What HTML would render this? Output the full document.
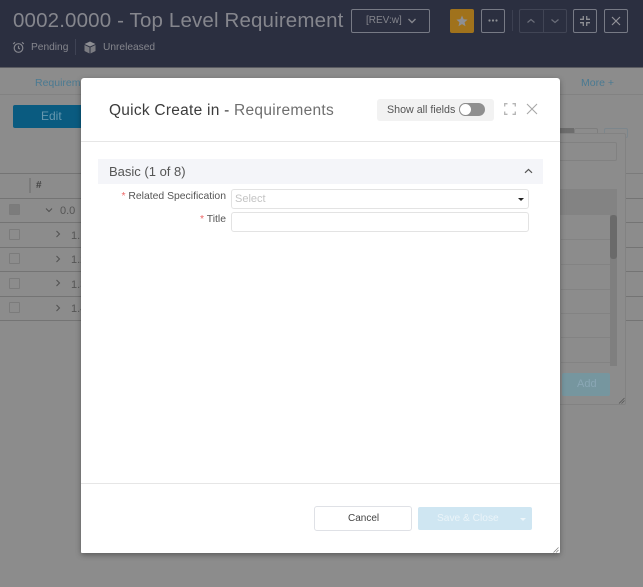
<!DOCTYPE html>
<html><head><meta charset="utf-8">
<style>
html,body{margin:0;padding:0;width:643px;height:587px;overflow:hidden;background:#8c8c8c}
body{position:relative;font-family:"Liberation Sans",sans-serif}
div,span,svg{position:absolute;box-sizing:border-box}
.t{white-space:nowrap;line-height:1}
.btn{border:1px solid #777a85;border-radius:2px;height:24px;top:9px}
.row{left:0;width:81px;height:1px;background:#747474}
.cb{left:9px;width:11px;height:11px;border:1px solid #7b7b7b;border-radius:1px}
.line{left:561px;height:1px;width:50px;background:#838383}
</style></head><body>
<div style="left:0;top:0;width:643px;height:68px;background:#2b2f40"></div>
<div style="left:0;top:67px;width:643px;height:1px;background:#5a5b61"></div>
<div class="t" style="left:13px;top:11px;font-size:20.5px;color:#85868d;letter-spacing:.15px">0002.0000 - Top Level Requirement</div>

<svg style="left:12px;top:41px" width="13" height="13" viewBox="0 0 13 13" fill="none" stroke="#85868d" stroke-width="1.2"><circle cx="6.5" cy="7" r="4.3"/><path d="M6.5 4.8V7.2L8 8M1.2 3 3 1.3M11.8 3 10 1.3"/></svg>
<div class="t" style="left:31px;top:43px;font-size:10.2px;color:#85868d">Pending</div>
<div style="left:75px;top:39px;width:1px;height:16px;background:#3f4354"></div>
<svg style="left:84px;top:41px" width="12" height="13" viewBox="0 0 12 13"><path d="M6 .5 11.5 3 6 5.5.5 3Z" fill="#8e8f94"/><path d="M.5 4 5.5 6.4V12.5L.5 10ZM11.5 4 6.5 6.4V12.5L11.5 10Z" fill="#7b7c82"/></svg>
<div class="t" style="left:103px;top:43px;font-size:10.2px;color:#85868d">Unreleased</div>

<div class="btn" style="left:351px;width:79px"></div>
<div class="t" style="left:366px;top:16px;font-size:10px;color:#85868d">[REV:w]</div>
<svg style="left:407px;top:17px" width="10" height="8" viewBox="0 0 10 8" fill="none" stroke="#85868d" stroke-width="1.4"><path d="M1.5 2 5 5.5 8.5 2"/></svg>

<div style="left:450px;top:9px;width:24px;height:24px;background:#a0721c;border-radius:2px"></div>
<svg style="left:456px;top:15px" width="12" height="12" viewBox="0 0 12 12"><path d="M6 .5 7.6 4.2 11.6 4.6 8.6 7.2 9.5 11.2 6 9.1 2.5 11.2 3.4 7.2.4 4.6 4.4 4.2Z" fill="#8e8f94"/></svg>

<div class="btn" style="left:481px;width:24px"></div>
<svg style="left:488px;top:18px" width="10" height="5" viewBox="0 0 10 5" fill="#8e8f94"><circle cx="1.5" cy="2.5" r="1.1"/><circle cx="5" cy="2.5" r="1.1"/><circle cx="8.5" cy="2.5" r="1.1"/></svg>

<div style="left:512px;top:10px;width:1px;height:21px;background:#3c4051"></div>
<div class="btn" style="left:519px;width:48px;border-color:#414555"></div>
<div style="left:543px;top:9px;width:1px;height:24px;background:#414555"></div>
<svg style="left:526px;top:17px" width="10" height="8" viewBox="0 0 10 8" fill="none" stroke="#6c6f7a" stroke-width="1.2"><path d="M1.5 5.5 5 2.5 8.5 5.5"/></svg>
<svg style="left:550px;top:17px" width="10" height="8" viewBox="0 0 10 8" fill="none" stroke="#6c6f7a" stroke-width="1.2"><path d="M1.5 2.5 5 5.5 8.5 2.5"/></svg>

<div class="btn" style="left:573px;width:24px"></div>
<svg style="left:579px;top:15px" width="12" height="12" viewBox="0 0 12 12" fill="none" stroke="#8e8f94" stroke-width="1.3"><path d="M4.3 1V4.3H1M7.7 1V4.3H11M4.3 11V7.7H1M7.7 11V7.7H11"/></svg>
<div class="btn" style="left:604px;width:24px"></div>
<svg style="left:611px;top:16px" width="10" height="10" viewBox="0 0 10 10" fill="none" stroke="#92939a" stroke-width="1.2"><path d="M1 1 9 9M9 1 1 9"/></svg>

<!-- background page -->
<div style="left:0;top:94px;width:643px;height:1px;background:#828282"></div>
<div class="t" style="left:35px;top:78px;font-size:10.5px;color:#4a7a92;width:46px;overflow:hidden;height:13px">Requirements</div>
<div class="t" style="left:581px;top:78px;font-size:10.5px;color:#4a7a92">More +</div>
<div style="left:13px;top:105px;width:75px;height:23px;background:#0a5b80;border-radius:2px"></div>
<div class="t" style="left:41px;top:110px;font-size:12px;color:#6797ae">Edit</div>

<div class="row" style="top:173px"></div>
<div style="left:29px;top:178px;width:2px;height:15px;background:#7b7b7b"></div>
<div class="t" style="left:36px;top:181px;font-size:10px;font-weight:bold;color:#444">#</div>
<div class="row" style="top:198px"></div>
<div class="row" style="top:222px"></div>
<div class="row" style="top:247px"></div>
<div class="row" style="top:271px"></div>
<div class="row" style="top:296px"></div>
<div class="row" style="top:320px"></div>
<div class="cb" style="top:204px;background:#7c7c7c"></div>
<div class="cb" style="top:229px"></div>
<div class="cb" style="top:253px"></div>
<div class="cb" style="top:278px"></div>
<div class="cb" style="top:302px"></div>
<svg style="left:45px;top:207px" width="8" height="6" viewBox="0 0 8 6" fill="none" stroke="#505050" stroke-width="1"><path d="M1 1.5 4 4.5 7 1.5"/></svg>
<div class="t" style="left:60px;top:206px;font-size:11px;color:#555">0.0</div>
<svg style="left:55px;top:230px" width="6" height="8" viewBox="0 0 6 8" fill="none" stroke="#505050" stroke-width="1"><path d="M1.5 1 4.5 4 1.5 7"/></svg>
<svg style="left:55px;top:255px" width="6" height="8" viewBox="0 0 6 8" fill="none" stroke="#505050" stroke-width="1"><path d="M1.5 1 4.5 4 1.5 7"/></svg>
<svg style="left:55px;top:279px" width="6" height="8" viewBox="0 0 6 8" fill="none" stroke="#505050" stroke-width="1"><path d="M1.5 1 4.5 4 1.5 7"/></svg>
<svg style="left:55px;top:304px" width="6" height="8" viewBox="0 0 6 8" fill="none" stroke="#505050" stroke-width="1"><path d="M1.5 1 4.5 4 1.5 7"/></svg>
<div class="t" style="left:71px;top:231px;font-size:11px;color:#555">1.1</div>
<div class="t" style="left:71px;top:255px;font-size:11px;color:#555">1.2</div>
<div class="t" style="left:71px;top:280px;font-size:11px;color:#555">1.3</div>
<div class="t" style="left:71px;top:304px;font-size:11px;color:#555">1.4</div>

<!-- right background panel -->
<div style="left:604px;top:128px;width:24px;height:10px;border:1px solid #7c868c;border-radius:2px"></div>
<div style="left:560px;top:128px;width:14px;height:5px;background:#6d6d6d"></div>
<div style="left:574px;top:128px;width:24px;height:6px;border:1px solid #7e7e7e;border-radius:2px 2px 0 0"></div>
<div style="left:620px;top:173px;width:23px;height:1px;background:#7b7b7b"></div>
<div style="left:626px;top:198px;width:17px;height:1px;background:#747474"></div>
<div style="left:626px;top:222px;width:17px;height:1px;background:#747474"></div>
<div style="left:626px;top:247px;width:17px;height:1px;background:#747474"></div>
<div style="left:626px;top:271px;width:17px;height:1px;background:#747474"></div>
<div style="left:626px;top:296px;width:17px;height:1px;background:#747474"></div>
<div style="left:626px;top:320px;width:17px;height:1px;background:#747474"></div>
<div style="left:540px;top:133px;width:86px;height:272px;background:#8c8c8c;border:1px solid #828282;border-radius:2px"></div>
<div style="left:556px;top:142px;width:61px;height:19px;border:1px solid #818181;border-radius:2px"></div>
<div style="left:556px;top:189px;width:61px;height:26px;background:#838383"></div>
<div class="line" style="top:239px"></div>
<div class="line" style="top:264px"></div>
<div class="line" style="top:289px"></div>
<div class="line" style="top:313px"></div>
<div class="line" style="top:337px"></div>
<div class="line" style="top:362px"></div>
<div style="left:610px;top:215px;width:7px;height:151px;background:#7f7f7f"></div>
<div style="left:610px;top:215px;width:7px;height:44px;background:#6a6a6a;border-radius:3px"></div>
<div style="left:562px;top:373px;width:48px;height:23px;background:#76969f;border-radius:2px"></div>
<div class="t" style="left:577px;top:379px;font-size:11px;color:#8aa7b5">Add</div>
<svg style="left:618px;top:397px" width="7" height="7" viewBox="0 0 7 7" fill="none" stroke="#555" stroke-width=".8"><path d="M1 6.5 6.5 1M3.5 6.5 6.5 3.5"/></svg>

<!-- modal -->
<div style="left:81px;top:78px;width:479px;height:475px;background:#fff;border-radius:3px 3px 1px 1px;box-shadow:0 2px 6px rgba(0,0,0,.35)"></div>
<div class="t" style="left:109px;top:103px;font-size:15.5px;color:#3c3c3c;letter-spacing:.25px">Quick Create in -</div>
<div class="t" style="left:234px;top:103px;font-size:15.5px;color:#6f6f6f;letter-spacing:.3px">Requirements</div>
<div style="left:377px;top:99px;width:117px;height:22px;background:#f2f2f2;border-radius:3px"></div>
<div class="t" style="left:387px;top:105px;font-size:10.7px;color:#555">Show all fields</div>
<div style="left:459px;top:103px;width:26px;height:13px;background:#8f8f8f;border-radius:7px"></div>
<div style="left:459px;top:103px;width:13px;height:13px;background:#fff;border:1px solid #8f8f8f;border-radius:50%"></div>
<svg style="left:504px;top:103px" width="12" height="12" viewBox="0 0 12 12" fill="none" stroke="#b5b5b5" stroke-width="1.3"><path d="M.7 3.5V.7H3.5M8.5.7H11.3V3.5M.7 8.5V11.3H3.5M8.5 11.3H11.3V8.5"/></svg>
<svg style="left:526px;top:103px" width="12" height="12" viewBox="0 0 12 12" fill="none" stroke="#a8a8a8" stroke-width="1.1"><path d="M1 1 11 11M11 1 1 11"/></svg>
<div style="left:81px;top:141px;width:479px;height:1px;background:#e6e6e6"></div>

<div style="left:98px;top:159px;width:445px;height:25px;background:#f4f5f9"></div>
<div class="t" style="left:109px;top:165px;font-size:13px;color:#555">Basic (1 of 8)</div>
<svg style="left:524px;top:168px" width="9" height="6" viewBox="0 0 9 6" fill="none" stroke="#555" stroke-width="1.2"><path d="M1 4.8 4.5 1.5 8 4.8"/></svg>

<div class="t" style="right:417px;top:192px;font-size:10.4px;color:#555"><span style="position:static;color:#e66">*</span> Related Specification</div>
<div class="t" style="right:417px;top:215px;font-size:10.4px;color:#555"><span style="position:static;color:#e66">*</span> Title</div>
<div style="left:231px;top:189px;width:298px;height:20px;border:1px solid #e3e3e3;border-radius:3px"></div>
<div class="t" style="left:235px;top:194px;font-size:11px;color:#c4c4c4">Select</div>
<div style="left:518px;top:198px;width:0;height:0;border-left:3px solid transparent;border-right:3px solid transparent;border-top:3px solid #222"></div>
<div style="left:231px;top:212px;width:298px;height:20px;border:1px solid #e3e3e3;border-radius:3px"></div>

<div style="left:81px;top:483px;width:479px;height:1px;background:#e6e6e6"></div>
<div style="left:314px;top:506px;width:98px;height:25px;border:1px solid #dfe1e6;border-radius:3px;background:#fff"></div>
<div class="t" style="left:348px;top:514px;font-size:10px;color:#444">Cancel</div>
<div style="left:418px;top:507px;width:114px;height:23px;background:#cfe6f2;border-radius:2px"></div>
<div class="t" style="left:437px;top:514px;font-size:10.2px;color:#eaf4f9">Save &amp; Close</div>
<div style="left:520px;top:518px;width:0;height:0;border-left:3px solid transparent;border-right:3px solid transparent;border-top:3px solid #eef6fa"></div>
<svg style="left:553px;top:547px" width="6" height="6" viewBox="0 0 6 6" fill="none" stroke="#777" stroke-width=".7"><path d="M.5 5.5 5.5.5M3 5.5 5.5 3"/></svg>
</body></html>
